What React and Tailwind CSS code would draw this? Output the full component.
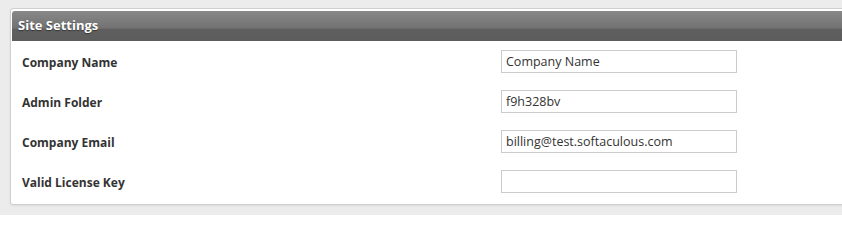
const fields = [
  { label: "Company Name", value: "Company Name" },
  { label: "Admin Folder", value: "f9h328bv" },
  { label: "Company Email", value: "billing@test.softaculous.com" },
  { label: "Valid License Key", value: "" },
];

const font = { fontFamily: '"Open Sans", "DejaVu Sans", sans-serif' };

export default function App() {
  return (
    <div
      className="w-[842px] h-[215px] overflow-hidden bg-[#ececec] pt-[8px] pl-[10px]"
      style={font}
    >
      <div className="w-[850px] h-[197px] bg-white border border-[#cfcfcf] rounded-[3px] p-[1px] pt-[2px] shadow-[0_1px_2px_rgba(0,0,0,0.08)]">
        <div className="h-[30px] rounded-t-[3px] bg-[linear-gradient(to_bottom,#888888_0%,#727272_58%,#5f5f5f_59%,#5c5c5c_100%)] flex items-center pl-[6px]">
          <span className="text-white font-bold text-[13px] [text-shadow:0_1px_1px_rgba(0,0,0,0.45)]">
            Site Settings
          </span>
        </div>
        <div className="flex flex-col">
          {fields.map((f) => (
            <div key={f.label} className="flex items-center h-[40px]">
              <label className="w-[489px] pl-[10px] pt-[3px] text-[12px] font-bold text-[#333]">
                {f.label}
              </label>
              <input
                type="text"
                defaultValue={f.value}
                className="w-[236px] h-[23px] border border-[#cccccc] px-[4px] text-[12.5px] text-[#333] outline-none"
                style={font}
              />
            </div>
          ))}
        </div>
      </div>
    </div>
  );
}
